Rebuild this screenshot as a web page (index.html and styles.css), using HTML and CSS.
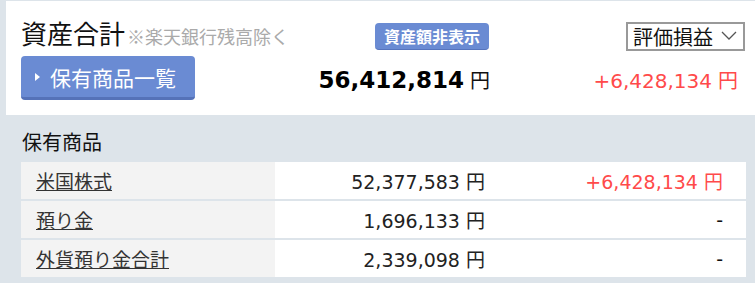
FILE: index.html
```html
<!DOCTYPE html>
<html lang="ja">
<head>
    <meta charset="UTF-8">
    <title>資産合計</title>
    <link rel="stylesheet" href="styles.css">
</head>
<body>
    <div class="summary">
        <div class="title">
            <span class="title-main">資産合計</span><span class="title-note">※楽天銀行残高除く</span>
        </div>
        <div class="cell-right">
            <span class="badge">資産額非表示</span>
        </div>
        <div class="cell-right">
            <div class="select">
                <span>評価損益</span>
                <svg width="16" height="10" viewBox="0 0 16 10"><path d="M1 1 L8 8 L15 1" fill="none" stroke="#555" stroke-width="1.3"/></svg>
            </div>
        </div>

        <div>
            <a class="list-btn" href="#"><span class="arrow"></span>保有商品一覧</a>
        </div>
        <div class="cell-right total">
            <span class="total-num">56,412,814</span><span class="yen">円</span>
        </div>
        <div class="cell-right profit">
            <span class="profit-num">+6,428,134</span><span class="yen">円</span>
        </div>
    </div>

    <div class="holdings">
        <h2>保有商品</h2>
        <table>
            <tr>
                <td class="label"><a href="#">米国株式</a></td>
                <td class="amount">52,377,583 円</td>
                <td class="gain plus">+6,428,134 円</td>
            </tr>
            <tr>
                <td class="label"><a href="#">預り金</a></td>
                <td class="amount">1,696,133 円</td>
                <td class="gain">-</td>
            </tr>
            <tr>
                <td class="label"><a href="#">外貨預り金合計</a></td>
                <td class="amount">2,339,098 円</td>
                <td class="gain">-</td>
            </tr>
        </table>
    </div>
</body>
</html>
```

FILE: styles.css
```css
* {
    margin: 0;
    padding: 0;
    box-sizing: border-box;
}

body {
    font-family: "DejaVu Sans", "Noto Sans CJK JP", sans-serif;
    background: #dde4ea;
    color: #222;
}

.summary {
    margin: 1px 0 0 6px;
    background: #fff;
    padding: 21px 10px 15px 15px;
    height: 114px;
    display: grid;
    grid-template-columns: 279px 190px 1fr;
    grid-template-rows: 28px 44px;
    row-gap: 6px;
    align-items: center;
}

.cell-right {
    display: flex;
    justify-content: flex-end;
    align-items: center;
}

.title {
    white-space: nowrap;
    line-height: 28px;
}

.title-main {
    font-family: "Noto Sans CJK JP", sans-serif;
    font-size: 26px;
    color: #111;
}

.title-note {
    font-family: "Noto Sans CJK JP", sans-serif;
    font-size: 18px;
    color: #aaa;
    margin-left: 2px;
}

.badge {
    display: inline-block;
    background: #6a8bd3;
    color: #fff;
    font-family: "Noto Sans CJK JP", sans-serif;
    font-weight: bold;
    font-size: 16px;
    line-height: 26px;
    padding: 0 9px;
    border-radius: 4px;
    border-bottom: 1px solid #5674bd;
    margin-right: 1px;
}

.select {
    display: flex;
    align-items: center;
    justify-content: space-between;
    width: 119px;
    height: 29px;
    border: 2px solid #999;
    padding: 0 6px 0 5px;
    font-family: "Noto Sans CJK JP", sans-serif;
    font-size: 20px;
    color: #111;
}

.list-btn {
    display: flex;
    align-items: center;
    width: 174px;
    height: 44px;
    background: #6a8bd3;
    border-bottom: 3px solid #5572b8;
    border-radius: 4px;
    color: #fff;
    text-decoration: none;
    font-family: "Noto Sans CJK JP", sans-serif;
    font-size: 21px;
    padding: 0 0 0 14px;
}

.arrow {
    width: 0;
    height: 0;
    border-left: 5px solid #fff;
    border-top: 4px solid transparent;
    border-bottom: 4px solid transparent;
    margin-right: 10px;
}

.total,
.profit {
    align-items: baseline;
    padding-top: 2px;
}

.total-num {
    font-size: 23px;
    font-weight: bold;
    color: #000;
    margin-right: 6px;
}

.yen {
    font-family: "Noto Sans CJK JP", sans-serif;
    font-size: 20px;
}

.total .yen {
    color: #111;
}

.profit {
    font-size: 20px;
    color: #ff4a4a;
    padding-right: 7px;
}

.profit-num {
    margin-right: 6px;
}

.holdings {
    padding: 12px 9px 7px 21px;
}

.holdings h2 {
    font-family: "Noto Sans CJK JP", sans-serif;
    font-weight: normal;
    font-size: 20px;
    line-height: 30px;
    color: #111;
    padding-left: 1px;
    margin-bottom: 3px;
}

table {
    width: 100%;
    border-collapse: separate;
    border-spacing: 0 2px;
    font-size: 19px;
}

td {
    height: 37px;
    background: #fff;
    white-space: nowrap;
}

td.label {
    width: 254px;
    background: #f3f3f3;
    padding-left: 15px;
    font-family: "Noto Sans CJK JP", sans-serif;
}

td.label a {
    color: #333;
    text-decoration: underline;
}

td.amount {
    width: 225px;
    text-align: right;
    padding-right: 15px;
    color: #222;
}

td.gain {
    text-align: right;
    padding-right: 23px;
    color: #111;
}

td.gain.plus {
    color: #ff4a4a;
}
```
